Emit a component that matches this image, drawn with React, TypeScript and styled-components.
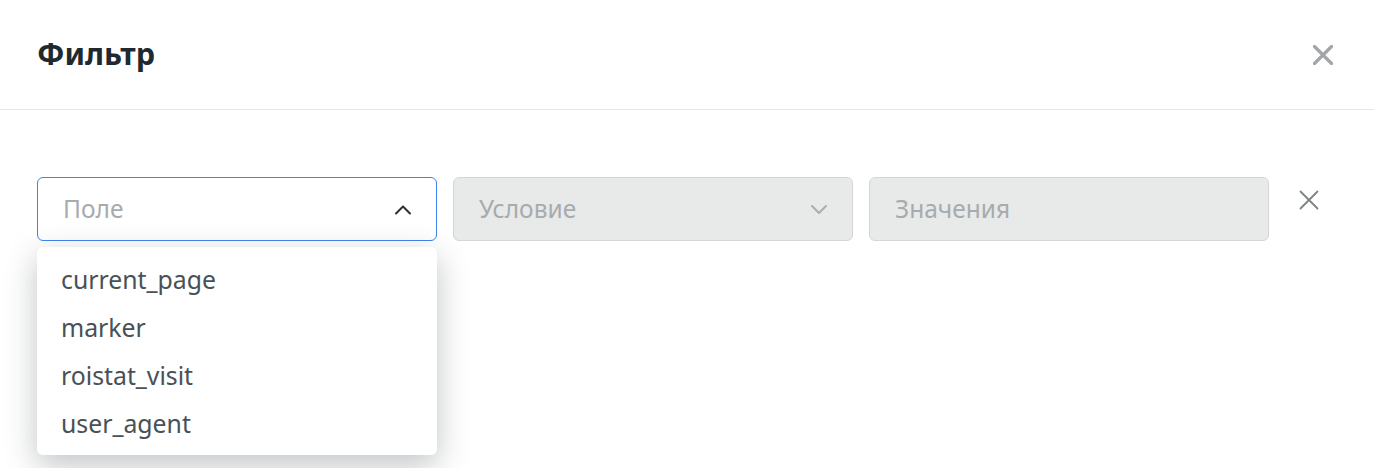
import React from "react";
import styled, { createGlobalStyle } from "styled-components";

const Global = createGlobalStyle`
  html, body { margin: 0; padding: 0; background: #fff; }
  body { font-family: "Noto Sans", "Open Sans", sans-serif; width: 1374px; height: 468px; overflow: hidden; }
  * { box-sizing: border-box; }
`;

const Modal = styled.div`
  width: 1374px;
  height: 468px;
  background: #fff;
  display: flex;
  flex-direction: column;
`;

const Header = styled.div`
  height: 110px;
  border-bottom: 1px solid #e6e7e7;
  display: flex;
  align-items: center;
  justify-content: space-between;
  padding: 0 40px 0 37px;
`;

const Title = styled.h2`
  margin: 0;
  font-size: 30.5px;
  font-weight: 700;
  color: #1f2a30;
  line-height: 1;
  padding-bottom: 2px;
`;

const IconButton = styled.button<{ $size: number; $color: string }>`
  border: none;
  background: transparent;
  padding: 0;
  width: ${(p) => p.$size}px;
  height: ${(p) => p.$size}px;
  color: ${(p) => p.$color};
  display: flex;
  align-items: center;
  justify-content: center;
  cursor: pointer;
`;

const Body = styled.div`
  padding: 67px 37px 0;
`;

const Row = styled.div`
  display: flex;
  align-items: flex-start;
  gap: 16px;
`;

const FieldWrap = styled.div`
  position: relative;
  width: 400px;
`;

const Field = styled.div<{ $active?: boolean; $disabled?: boolean }>`
  height: 64px;
  border-radius: 6px;
  border: ${(p) => (p.$active ? "1.5px solid #3f83f0" : "1px solid #d4d6d7")};
  background: ${(p) => (p.$disabled ? "#e8e9e9" : "#fff")};
  display: flex;
  align-items: center;
  justify-content: space-between;
  padding: 0 24px 0 25px;
`;

const Placeholder = styled.span`
  font-size: 24.5px;
  color: #a7abae;
  line-height: 1;
`;

const Menu = styled.ul`
  position: absolute;
  z-index: 2;
  top: 70px;
  left: 0;
  width: 400px;
  margin: 0;
  padding: 8px 0;
  list-style: none;
  background: #fff;
  border-radius: 6px;
  box-shadow: 0 10px 32px rgba(30, 40, 45, 0.28);
`;

const MenuItem = styled.li`
  height: 48px;
  display: flex;
  align-items: center;
  padding: 0 24px;
  font-size: 24.8px;
  color: #485156;
`;

const RowClose = styled(IconButton)`
  margin: 13px 0 0 14px;
`;

const Chevron = ({ up, color }: { up?: boolean; color: string }) => (
  <svg width="18" height="11" viewBox="0 0 18 11" fill="none">
    <path
      d={up ? "M2 9.5 L9 2.5 L16 9.5" : "M2 2 L9 9 L16 2"}
      stroke={color}
      strokeWidth={2}
      strokeLinecap="round"
      strokeLinejoin="round"
    />
  </svg>
);

const Cross = ({ size, stroke }: { size: number; stroke: number }) => (
  <svg width={size} height={size} viewBox={`0 0 ${size} ${size}`} fill="none">
    <path
      d={`M1.5 1.5 L${size - 1.5} ${size - 1.5} M${size - 1.5} 1.5 L1.5 ${size - 1.5}`}
      stroke="currentColor"
      strokeWidth={stroke}
      strokeLinecap="round"
    />
  </svg>
);

const options = ["current_page", "marker", "roistat_visit", "user_agent"];

export default function App() {
  return (
    <>
      <Global />
      <Modal>
        <Header>
          <Title>Фильтр</Title>
          <IconButton $size={22} $color="#a2a6a9" aria-label="Закрыть">
            <Cross size={20} stroke={3.2} />
          </IconButton>
        </Header>
        <Body>
          <Row>
            <FieldWrap>
              <Field $active>
                <Placeholder>Поле</Placeholder>
                <Chevron up color="#2a3136" />
              </Field>
              <Menu>
                {options.map((o) => (
                  <MenuItem key={o}>{o}</MenuItem>
                ))}
              </Menu>
            </FieldWrap>
            <FieldWrap>
              <Field $disabled>
                <Placeholder>Условие</Placeholder>
                <Chevron color="#a9aeb1" />
              </Field>
            </FieldWrap>
            <FieldWrap>
              <Field $disabled>
                <Placeholder>Значения</Placeholder>
              </Field>
            </FieldWrap>
            <RowClose $size={20} $color="#7d8285" aria-label="Удалить">
              <Cross size={20} stroke={1.8} />
            </RowClose>
          </Row>
        </Body>
      </Modal>
    </>
  );
}
